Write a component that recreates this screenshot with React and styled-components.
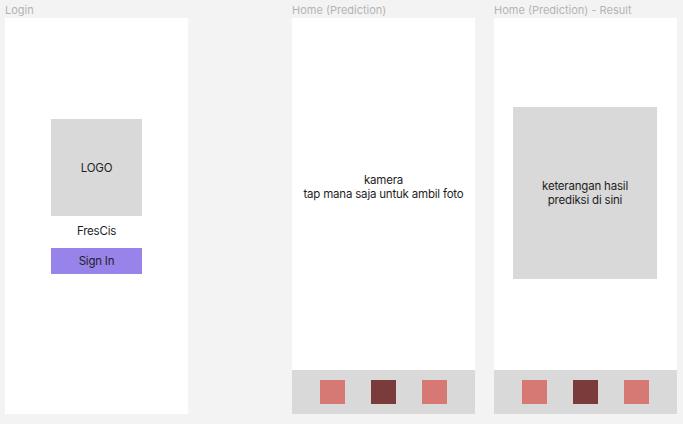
import React from "react";
import styled, { createGlobalStyle } from "styled-components";

const GlobalStyle = createGlobalStyle`
  html, body {
    margin: 0;
    padding: 0;
    background: #f3f3f3;
  }
  body {
    font-family: Inter, "Liberation Sans", Arial, sans-serif;
    color: #1e1e1e;
  }
`;

const Canvas = styled.div`
  display: flex;
  align-items: flex-start;
  width: 683px;
  height: 424px;
  padding-left: 5px;
  box-sizing: border-box;
  overflow: hidden;
`;

const Column = styled.div`
  display: flex;
  flex-direction: column;
  margin-right: ${(p) => p.$gap || 0}px;
`;

const FrameLabel = styled.div`
  height: 18px;
  line-height: 20px;
  font-size: 11px;
  color: #b3b3b3;
  white-space: nowrap;
`;

const Frame = styled.div`
  width: 183px;
  height: 396px;
  background: #ffffff;
  display: flex;
  flex-direction: column;
  box-sizing: border-box;
`;

const LoginBody = styled.div`
  display: flex;
  flex-direction: column;
  align-items: center;
  padding-top: 101px;
`;

const Placeholder = styled.div`
  width: ${(p) => p.$w}px;
  height: ${(p) => p.$h}px;
  background: #d9d9d9;
  display: flex;
  align-items: center;
  justify-content: center;
  text-align: center;
  font-size: 11.5px;
  letter-spacing: -0.2px;
  line-height: 14px;
`;

const AppName = styled.div`
  height: 32px;
  line-height: 30px;
  font-size: 11.5px;
  letter-spacing: -0.2px;
`;

const SignInButton = styled.button`
  width: 91px;
  height: 26px;
  border: none;
  padding: 0;
  background: #9883eb;
  font-family: inherit;
  font-size: 11.5px;
  letter-spacing: -0.2px;
  color: #1e1e1e;
`;

const Content = styled.div`
  flex: 1;
  display: flex;
  flex-direction: column;
  align-items: ${(p) => (p.$left ? "flex-start" : "center")};
  padding-top: ${(p) => p.$top}px;
  padding-left: ${(p) => p.$left || 0}px;
  text-align: center;
  font-size: 11.5px;
  letter-spacing: -0.2px;
  line-height: 14px;
`;

const NavBar = styled.div`
  height: 44px;
  background: #d9d9d9;
  display: flex;
  align-items: center;
  justify-content: center;
  gap: 26px;
`;

const NavItem = styled.div`
  width: 25px;
  height: 24px;
  background: ${(p) => (p.$active ? "#7b3b3b" : "#d67975")};
`;

const BottomNav = () => (
  <NavBar>
    <NavItem />
    <NavItem $active />
    <NavItem />
  </NavBar>
);

const App = () => {
  return (
    <>
      <GlobalStyle />
      <Canvas>
        <Column $gap={104}>
          <FrameLabel>Login</FrameLabel>
          <Frame>
            <LoginBody>
              <Placeholder $w={91} $h={97}>LOGO</Placeholder>
              <AppName>FresCis</AppName>
              <SignInButton>Sign In</SignInButton>
            </LoginBody>
          </Frame>
        </Column>
        <Column $gap={19}>
          <FrameLabel>Home (Prediction)</FrameLabel>
          <Frame>
            <Content $top={155}>
              kamera
              <br />
              tap mana saja untuk ambil foto
            </Content>
            <BottomNav />
          </Frame>
        </Column>
        <Column>
          <FrameLabel>Home (Prediction) - Result</FrameLabel>
          <Frame>
            <Content $top={89} $left={19}>
              <Placeholder $w={144} $h={172}>
                keterangan hasil
                <br />
                prediksi di sini
              </Placeholder>
            </Content>
            <BottomNav />
          </Frame>
        </Column>
      </Canvas>
    </>
  );
};

export default App;
